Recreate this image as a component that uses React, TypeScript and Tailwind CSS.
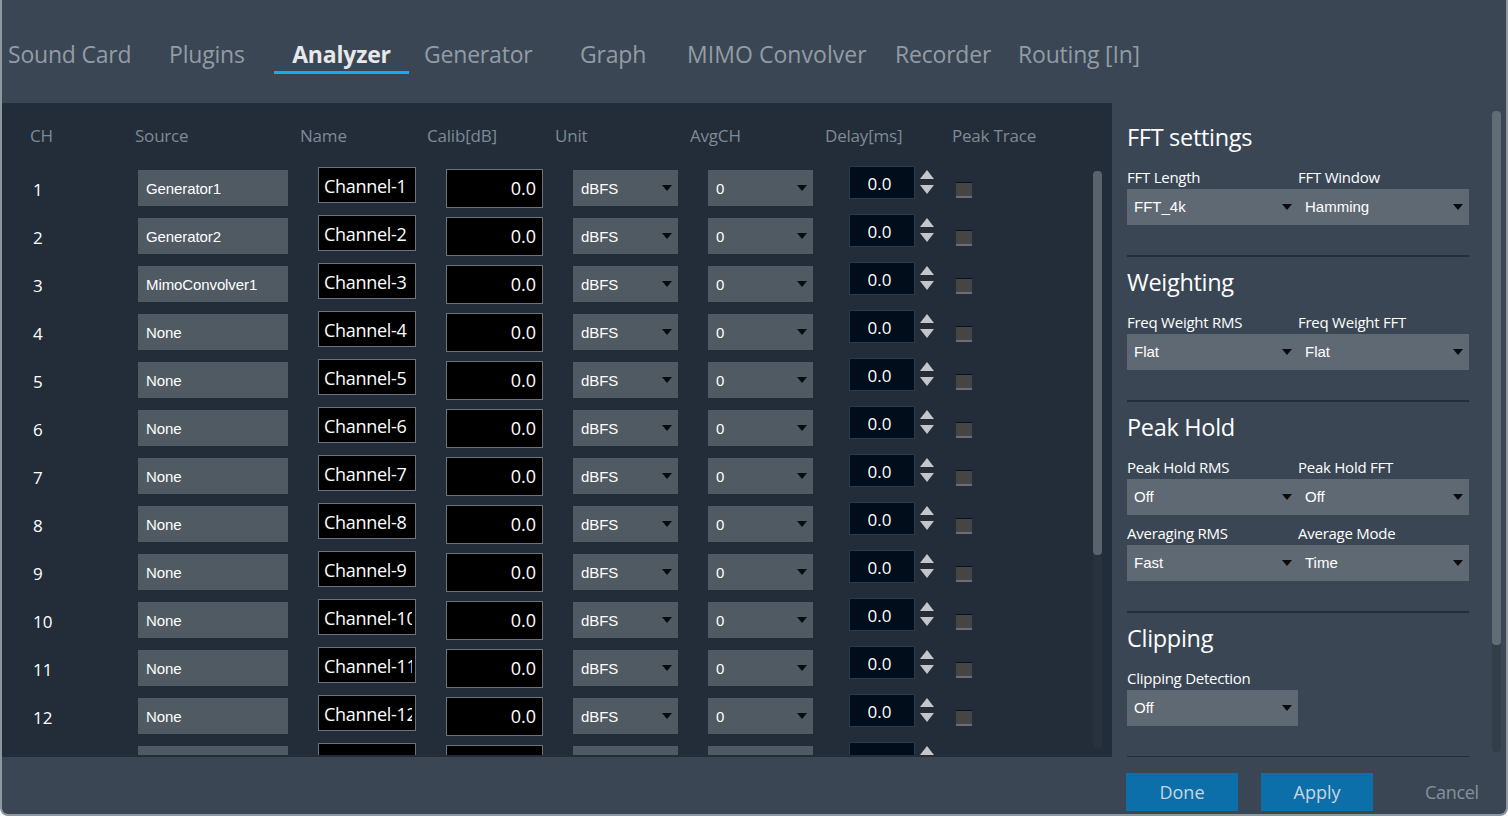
const tabs = [
  { label: "Sound Card", className: "ml-[6px] w-[123px]" },
  { label: "Plugins", className: "ml-[38px] w-[76px]" },
  { label: "Analyzer", className: "ml-[29px] w-[135px] text-center font-bold text-[#e6e8ea] border-[#16a9f5]" },
  { label: "Generator", className: "ml-[15px] w-[106px]" },
  { label: "Graph", className: "ml-[50px] w-[64px]" },
  { label: "MIMO Convolver", className: "ml-[43px] w-[180px] tracking-[0.05px]" },
  { label: "Recorder", className: "ml-[28px] w-[94px]" },
  { label: "Routing [In]", className: "ml-[29px] w-[122px]" },
];

const columns = [
  { label: "CH", className: "w-[105px]" },
  { label: "Source", className: "w-[165px]" },
  { label: "Name", className: "w-[127px]" },
  { label: "Calib[dB]", className: "w-[128px]" },
  { label: "Unit", className: "w-[135px]" },
  { label: "AvgCH", className: "w-[135px]" },
  { label: "Delay[ms]", className: "w-[127px]" },
  { label: "Peak Trace", className: "" },
];

const sources = ["Generator1", "Generator2", "MimoConvolver1"];
const channels = Array.from({ length: 13 }, (_, i) => i + 1);

function Caret() {
  return (
    <svg className="h-[6px] w-[10px] shrink-0" viewBox="0 0 10 6">
      <path d="M0 0h10L5 6z" fill="#0b0b0b" />
    </svg>
  );
}

function TableSelect({ value, width, className = "" }: { value: string; width: string; className?: string }) {
  return (
    <div className={`flex h-[36px] items-center justify-between bg-[#4f5a63] pl-[8px] pr-[6px] font-['Liberation_Sans',sans-serif] text-[15px] tracking-[-0.1px] text-white ${width} ${className}`}>
      <span className="pt-[2px]">{value}</span>
      {value !== "" && width !== "w-[150px]" && <Caret />}
    </div>
  );
}

function ChannelRow({ n }: { n: number }) {
  const source = sources[n - 1] ?? "None";
  const last = n === 13;
  return (
    <div className="flex h-[48px] shrink-0 items-start">
      <div className="mt-[12px] w-[136px] pl-[31px] text-[17px] leading-[24px] text-white">{last ? "" : n}</div>
      <TableSelect value={last ? "" : source} width="w-[150px]" className="mt-[4px]" />
      <div className="ml-[30px] mt-[1px] h-[36px] w-[98px] border border-[#6b7278] bg-black pl-[5px] pr-[3px] text-[18px] leading-[34px] tracking-[-0.3px] text-white">
        <div className="h-full overflow-hidden whitespace-nowrap pt-[1px]">{last ? "" : `Channel-${n}`}</div>
      </div>
      <div className="ml-[30px] mt-[3px] h-[39px] w-[97px] border border-[#6b7278] bg-black pr-[6px] text-right text-[18px] leading-[37px] text-white">
        {last ? "" : "0.0"}
      </div>
      <TableSelect value={last ? "" : "dBFS"} width="w-[105px]" className="ml-[30px] mt-[4px]" />
      <TableSelect value={last ? "" : "0"} width="w-[105px]" className="ml-[30px] mt-[4px]" />
      <div className="ml-[36px] h-[33px] w-[66px] border border-[#1f4050] bg-[#020d1c] pr-[5px] text-center text-[17px] leading-[33px] text-white">
        {last ? "" : "0.0"}
      </div>
      <div className="ml-[5px] mt-[4px] flex w-[14px] flex-col gap-[6px]">
        <svg className="h-[9px] w-[14px]" viewBox="0 0 14 9">
          <path d="M7 0l7 9H0z" fill="#c4c6c8" />
        </svg>
        <svg className="h-[9px] w-[14px]" viewBox="0 0 14 9">
          <path d="M0 0h14L7 9z" fill="#c4c6c8" />
        </svg>
      </div>
      <div className="ml-[22px] mt-[16px] h-[16px] w-[16px] border-b-2 border-t border-b-[#6e6e6e] border-t-[#111111] bg-[#454545]" />
    </div>
  );
}

function Field({ label, value, width = "w-[171px]" }: { label: string; value: string; width?: string }) {
  return (
    <div className={width}>
      <div className="h-[20px] text-[15px] leading-[20px] tracking-[-0.25px] text-white">{label}</div>
      <div className="mt-[2px] flex h-[36px] items-center justify-between bg-[#5f6974] pl-[7px] pr-[6px] font-['Liberation_Sans',sans-serif] text-[15px] text-white">
        <span>{value}</span>
        <Caret />
      </div>
    </div>
  );
}

function Section({ title, children }: { title: string; children: React.ReactNode }) {
  return (
    <div>
      <h2 className="mb-[13px] h-[34px] text-[23.5px] font-normal leading-[34px] tracking-[-0.3px] text-white">{title}</h2>
      {children}
      <div className="mb-[8px] mt-[30px] h-[2px] bg-[#232e3a]" />
    </div>
  );
}

export default function App() {
  return (
    <div className="h-[816px] w-[1508px] overflow-hidden bg-white font-['Open_Sans',sans-serif]">
      <div className="flex h-full flex-col overflow-hidden rounded-b-[8px] border-x-2 border-b-2 border-[#8f979e] bg-[#3a4654]">
        <nav className="flex h-[103px] shrink-0 items-start pt-[36px] text-[23px] leading-[36px] tracking-[-0.2px] text-[#929ca5]">
          {tabs.map((tab) => (
            <div key={tab.label} className={`h-[38px] whitespace-nowrap border-b-[3px] ${tab.label === "Analyzer" ? "" : "border-transparent"} ${tab.className}`}>
              {tab.label}
            </div>
          ))}
        </nav>

        <div className="flex h-[654px] shrink-0">
          <section className="flex w-[1110px] shrink-0 bg-[#222d39]">
            <div className="h-[652px] w-[1091px] shrink-0 overflow-hidden">
              <div className="flex h-[63px] pl-[28px] pt-[20px] text-[17px] leading-[26px] tracking-[-0.2px] text-[#7f8a94]">
                {columns.map((col) => (
                  <div key={col.label} className={`whitespace-nowrap ${col.className}`}>
                    {col.label}
                  </div>
                ))}
              </div>
              {channels.map((n) => (
                <ChannelRow key={n} n={n} />
              ))}
            </div>
            <div className="mt-[68px] h-[577px] w-[9px] rounded-[4px] bg-[#27323e]">
              <div className="h-[384px] rounded-[4px] bg-[#59636d]" />
            </div>
          </section>

          <aside className="flex min-w-0 flex-1">
            <div className="h-[654px] w-[380px] shrink-0 overflow-hidden pl-[15px] pr-[23px] pt-[17px]">
              <Section title="FFT settings">
                <div className="flex">
                  <Field label="FFT Length" value="FFT_4k" />
                  <Field label="FFT Window" value="Hamming" />
                </div>
              </Section>
              <Section title="Weighting">
                <div className="flex">
                  <Field label="Freq Weight RMS" value="Flat" />
                  <Field label="Freq Weight FFT" value="Flat" />
                </div>
              </Section>
              <Section title="Peak Hold">
                <div className="flex">
                  <Field label="Peak Hold RMS" value="Off" />
                  <Field label="Peak Hold FFT" value="Off" />
                </div>
                <div className="mt-[8px] flex">
                  <Field label="Averaging RMS" value="Fast" />
                  <Field label="Average Mode" value="Time" />
                </div>
              </Section>
              <Section title="Clipping">
                <Field label="Clipping Detection" value="Off" />
              </Section>
            </div>
            <div className="mt-[8px] h-[641px] w-[9px] rounded-[4px] bg-[#323e4a]">
              <div className="h-[534px] rounded-[4px] bg-[#626c76]" />
            </div>
          </aside>
        </div>

        <footer className="flex flex-1 items-start justify-end pr-[28px] pt-[16px] text-[18px] leading-[38px]">
          <button type="button" className="h-[38px] w-[112px] bg-[#0c6faa] text-[#c9d6df]">Done</button>
          <button type="button" className="ml-[23px] h-[38px] w-[112px] bg-[#0c6faa] text-[#c9d6df]">Apply</button>
          <button type="button" className="ml-[52px] w-[53px] whitespace-nowrap tracking-[-0.3px] text-[#87919b]">Cancel</button>
        </footer>
      </div>
    </div>
  );
}
